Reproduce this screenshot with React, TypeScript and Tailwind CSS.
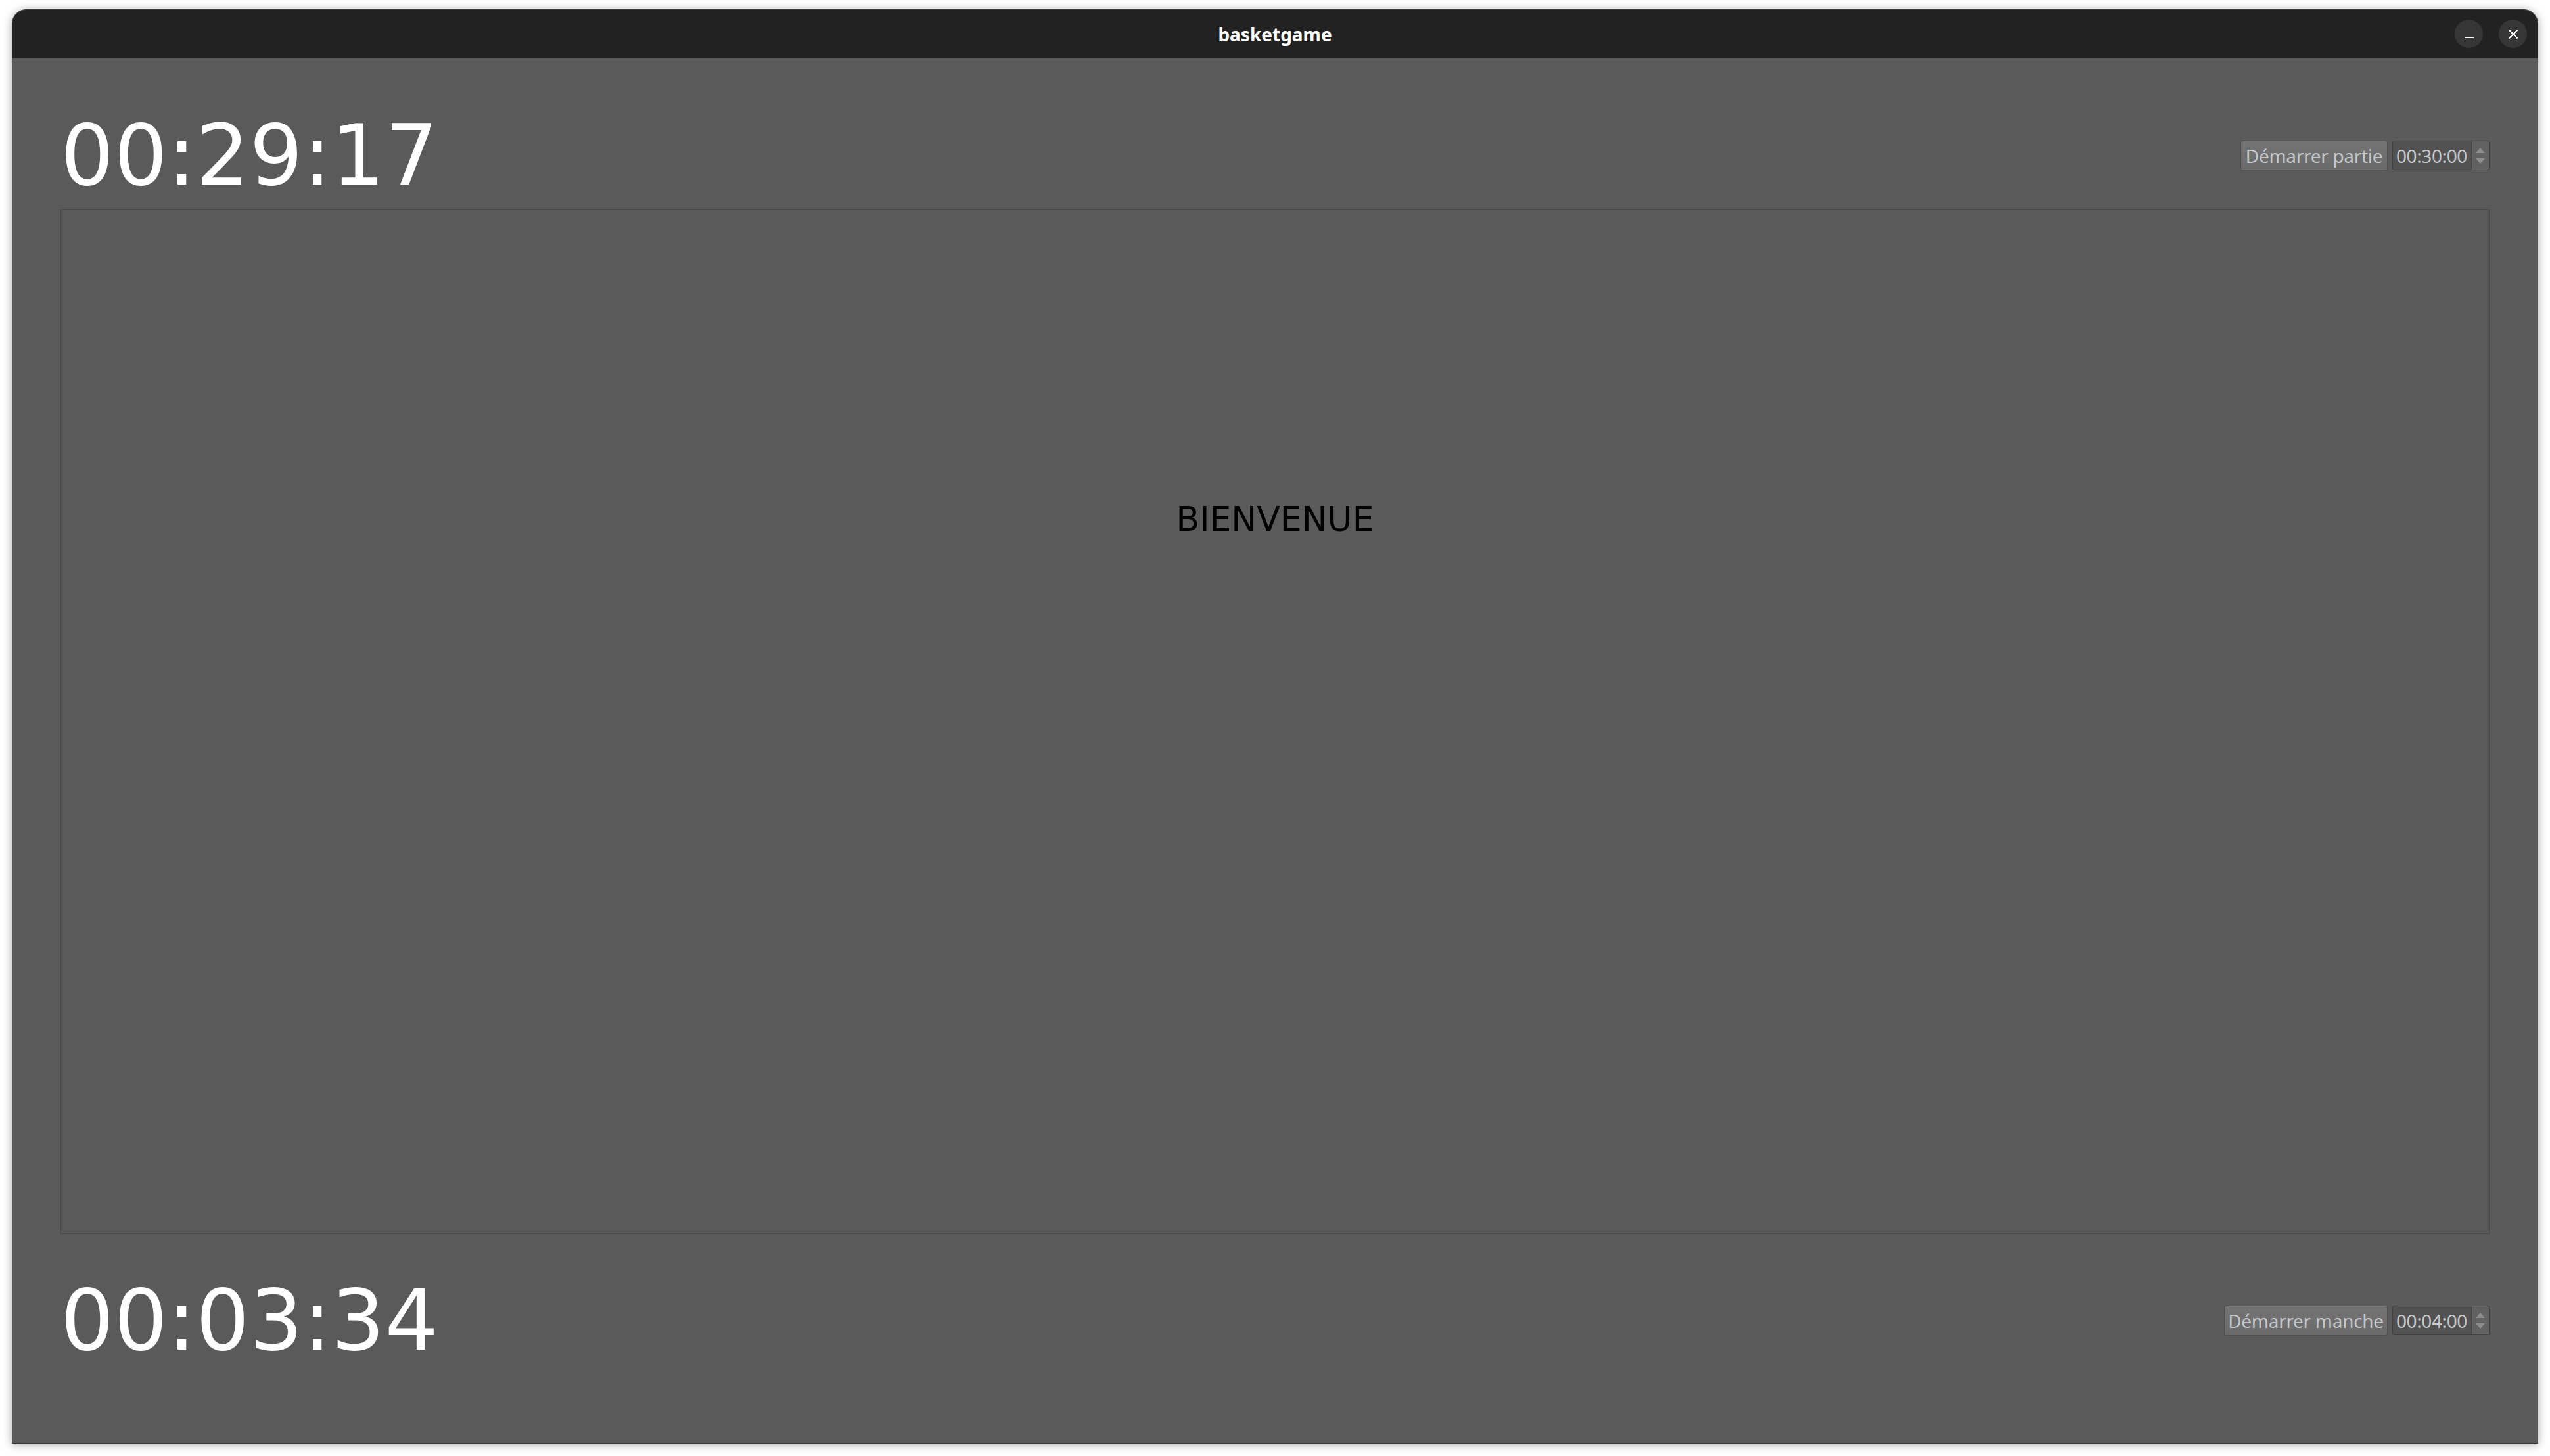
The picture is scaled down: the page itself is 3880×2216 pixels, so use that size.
const dejavu = { fontFamily: '"DejaVu Sans", sans-serif' }

function TitleButton({ kind }: { kind: 'min' | 'close' }) {
  return (
    <div className="w-[43px] h-[43px] rounded-full bg-[#363636] flex items-center justify-center">
      {kind === 'min' ? (
        <svg width="16" height="16" viewBox="0 0 16 16">
          <path d="M1 13h14" stroke="#ffffff" strokeWidth={2} />
        </svg>
      ) : (
        <svg width="16" height="16" viewBox="0 0 16 16">
          <path d="M1.5 1.5l13 13M14.5 1.5l-13 13" stroke="#ffffff" strokeWidth={2} />
        </svg>
      )}
    </div>
  )
}

function SpinBox({ value }: { value: string }) {
  return (
    <div className="w-[148px] h-[45px] flex rounded-[3px] border border-[#404040] bg-[#525252] overflow-hidden">
      <div className="flex-1 flex items-center pl-[5px] text-[28px] text-[#c5c8ca] font-['Noto_Sans',sans-serif] tracking-[-0.4px]">
        {value}
      </div>
      <div className="w-[27px] flex flex-col items-center justify-center gap-[8px] border-l border-[#474747] bg-[#626262]">
        <svg width="14" height="8" viewBox="0 0 14 8">
          <path d="M7 0L14 8H0z" fill="#8e8e8e" />
        </svg>
        <svg width="14" height="8" viewBox="0 0 14 8">
          <path d="M0 0H14L7 8z" fill="#8e8e8e" />
        </svg>
      </div>
    </div>
  )
}

function TimerRow({ time, label, value, buttonWidth }: { time: string; label: string; value: string; buttonWidth: string }) {
  return (
    <div className="h-[129px] flex items-center justify-between">
      <span className="text-[128px] leading-none text-white" style={dejavu}>
        {time}
      </span>
      <div className="flex items-center gap-[7px]">
        <div
          className={`${buttonWidth} h-[46px] flex items-center justify-center rounded-[3px] border border-[#4e4e4e] bg-gradient-to-b from-[#747474] to-[#6a6a6a] text-[28px] text-[#c5c8ca] font-['Noto_Sans',sans-serif] tracking-[-0.3px]`}
        >
          {label}
        </div>
        <SpinBox value={value} />
      </div>
    </div>
  )
}

export default function App() {
  return (
    <div className="w-[3880px] h-[2216px] bg-white pt-[14px] pl-[18px]">
      <div className="w-[3844px] h-[2183px] flex flex-col rounded-t-[22px] border border-[#363636] bg-[#5a5a5a] overflow-hidden shadow-[0_2px_14px_rgba(0,0,0,0.35)]">
        <header className="h-[74px] shrink-0 grid grid-cols-[1fr_auto_1fr] items-center bg-[#222222] border-b border-[#1a1a1a]">
          <div />
          <span className="text-[28px] font-bold text-white font-['Noto_Sans',sans-serif]">basketgame</span>
          <div className="flex justify-end items-center gap-[24px] pr-[16px]">
            <TitleButton kind="min" />
            <TitleButton kind="close" />
          </div>
        </header>

        <main className="flex-1 flex flex-col px-[73px] pt-[83px] pb-[122px]">
          <TimerRow time="00:29:17" label="Démarrer partie" value="00:30:00" buttonWidth="w-[224px]" />

          <div className="mt-[17px] flex-1 flex flex-col items-center border border-[#4a4a4a] pt-[445px]">
            <span className="text-[52px] leading-none text-black" style={dejavu}>
              BIENVENUE
            </span>
          </div>

          <div className="mt-[67px]">
            <TimerRow time="00:03:34" label="Démarrer manche" value="00:04:00" buttonWidth="w-[249px]" />
          </div>
        </main>
      </div>
    </div>
  )
}
